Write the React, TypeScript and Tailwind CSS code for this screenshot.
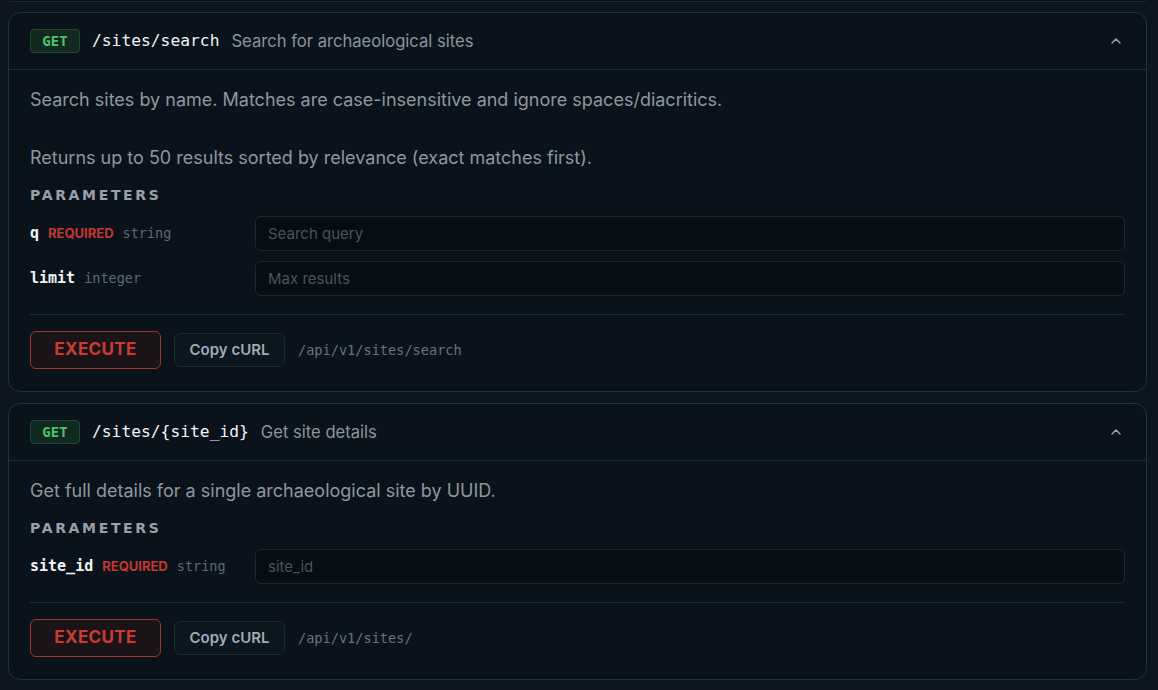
import { ChevronUp } from "lucide-react";

type Param = {
    name: string;
    required?: boolean;
    type: string;
    placeholder: string;
};

type Endpoint = {
    method: string;
    path: string;
    summary: string;
    description: string;
    params: Param[];
    url: string;
};

const endpoints: Endpoint[] = [
    {
        method: "GET",
        path: "/sites/search",
        summary: "Search for archaeological sites",
        description:
            "Search sites by name. Matches are case-insensitive and ignore spaces/diacritics.\n\nReturns up to 50 results sorted by relevance (exact matches first).",
        params: [
            { name: "q", required: true, type: "string", placeholder: "Search query" },
            { name: "limit", type: "integer", placeholder: "Max results" },
        ],
        url: "/api/v1/sites/search",
    },
    {
        method: "GET",
        path: "/sites/{site_id}",
        summary: "Get site details",
        description: "Get full details for a single archaeological site by UUID.",
        params: [
            { name: "site_id", required: true, type: "string", placeholder: "site_id" },
        ],
        url: "/api/v1/sites/",
    },
];

const mono = "font-['DejaVu_Sans_Mono',monospace]";

const EndpointCard = ({ ep }: { ep: Endpoint }) => {
    return (
        <div className="rounded-xl border border-[#1d3638] bg-[#0a131b]">
            <div className="flex h-[57px] items-center border-b border-[#1a2f33] pl-[21px] pr-[22px]">
                <span
                    className={`${mono} flex h-[24px] w-[50px] items-center justify-center rounded-[4px] border border-[#1f4a32] bg-[#12291f] text-[14px] font-bold text-[#4cc36a]`}
                >
                    {ep.method}
                </span>
                <span className={`${mono} ml-[12px] text-[16.3px] text-[#f2f4f5]`}>
                    {ep.path}
                </span>
                <span className="ml-[12px] text-[16.6px] text-[#8b949c]">{ep.summary}</span>
                <ChevronUp className="ml-auto h-[16px] w-[16px] text-[#9aa3ab]" strokeWidth={2.2} />
            </div>
            <div className="px-[21px] pt-[15px] pb-[22px]">
                <p className="whitespace-pre-line text-[18px] leading-[29px] text-[#8f979e]">
                    {ep.description}
                </p>
                <p className="mt-[13px] text-[14px] font-semibold tracking-[0.19em] text-[#9aa0a6] font-['DejaVu_Sans',sans-serif]">
                    PARAMETERS
                </p>
                <div className="mt-[10px] flex flex-col gap-[10px]">
                    {ep.params.map((p) => (
                        <div key={p.name} className="flex items-center">
                            <div className="flex w-[225px] items-center gap-[9px]">
                                <span className={`${mono} text-[15px] font-bold text-[#f2f4f5]`}>
                                    {p.name}
                                </span>
                                {p.required && (
                                    <span className="text-[13px] font-bold text-[#c4372f]">
                                        REQUIRED
                                    </span>
                                )}
                                <span className={`${mono} text-[13.5px] text-[#5f6972]`}>
                                    {p.type}
                                </span>
                            </div>
                            <input
                                placeholder={p.placeholder}
                                className="h-[35px] flex-1 rounded-md border border-[#1b2a31] bg-[#060d13] px-[12px] text-[15px] text-[#c9d1d9] outline-none placeholder:text-[#4a545d]"
                            />
                        </div>
                    ))}
                </div>
                <div className="mt-[18px] border-t border-[#1a2f33]" />
                <div className="mt-[16px] flex items-center">
                    <button className="h-[38px] w-[131px] rounded-md border border-[#9e3530] bg-[#1a1418] text-[17px] font-bold tracking-[0.02em] text-[#c93c34]">
                        EXECUTE
                    </button>
                    <button className="ml-[13px] h-[34px] w-[111px] rounded-md border border-[#1c2b33] bg-[#0b161e] text-[15px] font-semibold text-[#a3abb2]">
                        Copy cURL
                    </button>
                    <span className={`${mono} ml-[13px] text-[13.6px] text-[#68727b]`}>
                        {ep.url}
                    </span>
                </div>
            </div>
        </div>
    );
};

export default function App() {
    return (
        <div className="h-[690px] overflow-hidden bg-[#0d161f] pl-2 pr-[11px] font-['Inter',sans-serif]">
            <div className="h-[2px] rounded-b-xl border-b border-[#1a2a30] bg-[#0a131b]" />
            <div className="mt-[10px] flex flex-col gap-[11px]">
                {endpoints.map((ep) => (
                    <EndpointCard key={ep.path} ep={ep} />
                ))}
            </div>
        </div>
    );
}
